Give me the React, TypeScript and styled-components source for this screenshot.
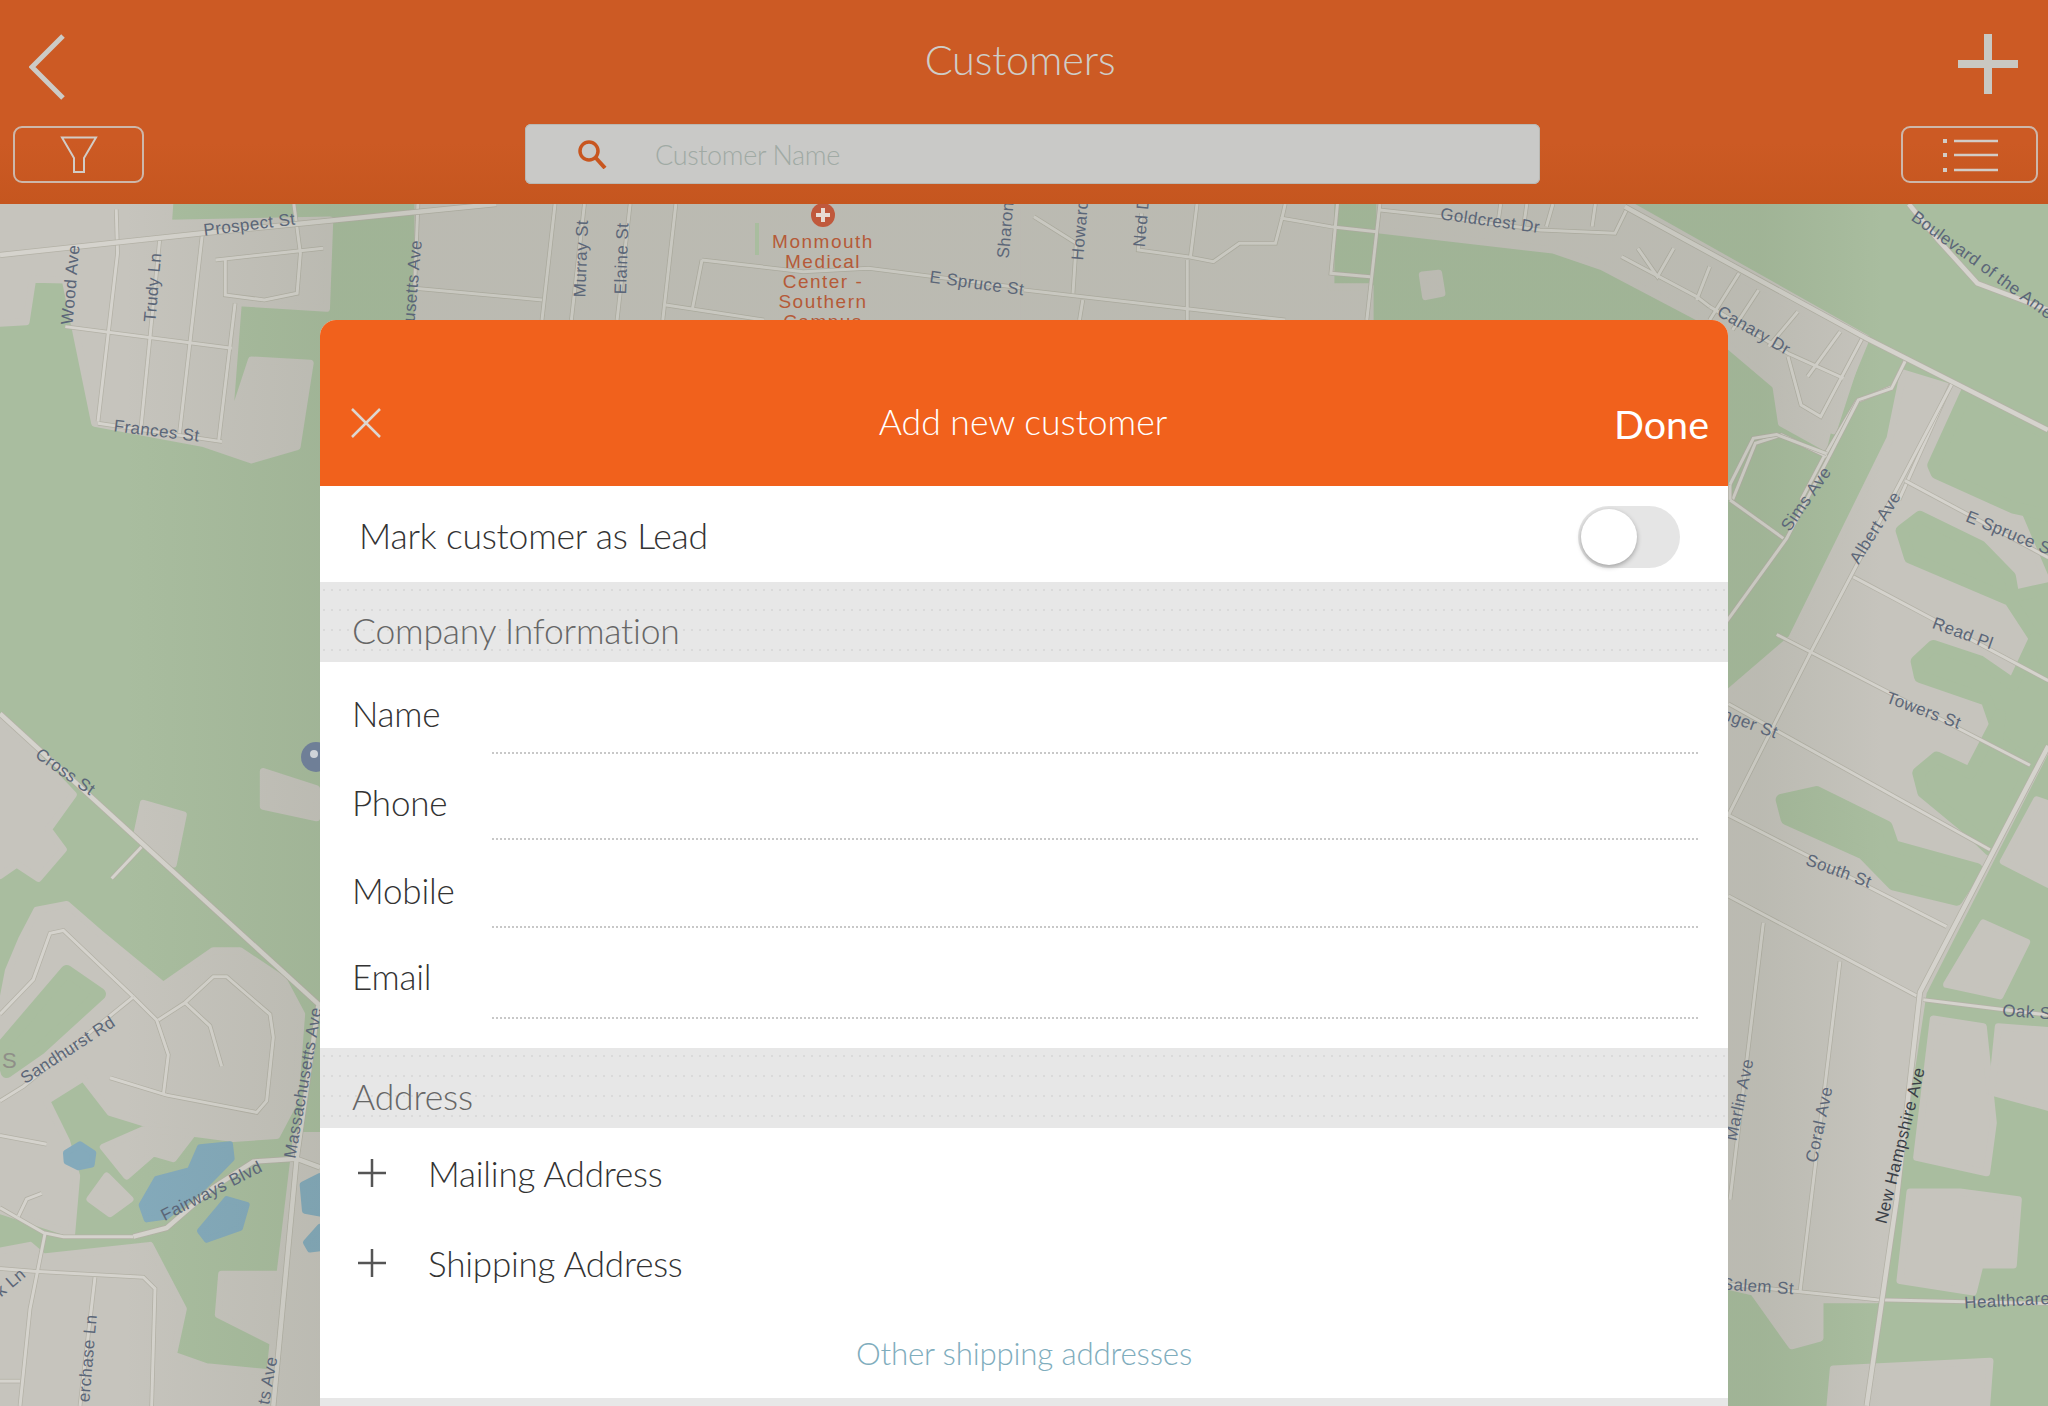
import React from 'react';
import styled, { createGlobalStyle } from 'styled-components';

const GlobalStyle = createGlobalStyle`
  html, body { margin: 0; padding: 0; background: #fff; }
  body { font-family: Lato, "Open Sans", sans-serif; font-weight: 300; }
`;

const Page = styled.div`
  position: relative; width: 2048px; height: 1406px; overflow: hidden;
  display: flex; flex-direction: column;
`;

const TopBar = styled.header`
  flex: 0 0 204px; display: flex; flex-direction: column;
  background: linear-gradient(180deg, #cc5a24 0%, #cc5a24 70%, #c5561f 100%);
`;
const TitleRow = styled.div`
  height: 124px; display: flex; align-items: flex-start; justify-content: space-between;
  padding: 0 29px 0 29px;
`;
const BackButton = styled.button`
  width: 40px; height: 70px; margin-top: 32px; padding: 0; border: none; background: none;
`;
const AddButton = styled.button`
  width: 62px; height: 62px; margin-top: 33px; padding: 0; border: none; background: none;
`;
const Title = styled.h1`
  margin: 36px 0 0 14px; font-size: 41.5px; line-height: 46px; font-weight: 300;
  color: #cfcdc8; letter-spacing: -0.2px;
`;
const ToolRow = styled.div`
  display: grid; grid-template-columns: 131px 1fr 137px; align-items: start; padding: 0 10px 0 13px;
`;
const ToolButton = styled.button`
  height: 57px; margin-top: 2px; padding: 0; background: none; border-radius: 9px;
  border: 2px solid #cdb7aa; display: flex; align-items: center; justify-content: center;
`;
const SearchBox = styled.div`
  height: 60px; margin: 0 361px 0 381px; background: #c9c9c7; border-radius: 6px;
  box-shadow: inset 0 0 0 1px #b9b8b3;
  display: flex; align-items: center; padding-left: 52px; box-sizing: border-box;
`;
const SearchText = styled.span`
  margin-left: 48px; font-size: 27px; color: #a0aaa4; letter-spacing: -0.35px;
`;

const MapArea = styled.div`
  flex: 1; overflow: hidden; background: #a9bd9f;
`;
const MapCanvas = styled.svg`
  display: block; width: 2048px; height: 1202px;
`;
const StreetLabel = styled.text<{ $dark?: boolean }>`
  font-family: "Liberation Sans", Arial, sans-serif; font-size: 17px; letter-spacing: 0.4px;
  fill: ${p => (p.$dark ? '#3a3f48' : '#5b6678')}; text-anchor: middle; dominant-baseline: central;
`;
const PlaceLabel = styled.text`
  font-family: "Liberation Sans", Arial, sans-serif; font-size: 19px; letter-spacing: 1.5px;
  fill: #b55a38; text-anchor: middle;
`;

const Modal = styled.section`
  position: absolute; left: 320px; top: 320px; width: 1408px; bottom: 0;
  background: #fff; border-radius: 16px 16px 0 0; overflow: hidden;
`;
const ModalHeader = styled.div`
  height: 166px; background: #f1611c; color: #fff; box-sizing: border-box;
  display: grid; grid-template-columns: 1fr auto 1fr; align-items: center;
  padding: 37px 19px 0 31px;
`;
const CloseButton = styled.button`
  justify-self: start; width: 30px; height: 30px; margin-top: 2px; padding: 0; border: none; background: none;
`;
const ModalTitle = styled.h2`
  margin: 0 14px 0 0; font-size: 35.5px; line-height: 44px; font-weight: 300; color: #fff;
`;
const DoneButton = styled.button`
  justify-self: end; padding: 0; border: none; background: none; color: #fff;
  font-family: Lato, sans-serif; font-size: 39.5px; line-height: 48px; font-weight: 400;
  margin-top: 4px;
`;
const LeadRow = styled.div`
  height: 96px; display: flex; align-items: center; justify-content: space-between;
  padding: 0 48px 0 39px;
`;
const RowText = styled.span`
  font-size: 35px; color: #333; letter-spacing: -0.2px;
`;
const LeadText = styled(RowText)`
  font-size: 35.5px; margin-top: 2px;
`;
const Toggle = styled.div`
  width: 102px; height: 62px; padding: 3px; box-sizing: border-box; border-radius: 31px;
  background: #e5e5e5; margin-top: 6px;
`;
const ToggleKnob = styled.div`
  width: 56px; height: 56px; border-radius: 50%; background: #fff;
  box-shadow: 0 2px 5px rgba(0, 0, 0, 0.3);
`;
const SectionHead = styled.div`
  height: 80px; box-sizing: border-box; padding: 0 0 9px 32px; display: flex; align-items: flex-end;
  font-size: 35.5px; line-height: 44px; color: #666; letter-spacing: -0.2px;
  background-color: #e7e7e7;
  background-image: radial-gradient(circle, #dadada 0.7px, transparent 1px);
  background-size: 8px 20px;
  background-position: 0 18px;
`;
const Fields = styled.div`
  padding-bottom: 29px;
`;
const FieldRow = styled.div<{ $height: number }>`
  height: ${p => p.$height}px; display: flex; align-items: flex-end; padding: 0 30px 0 32px;
`;
const FieldLabel = styled.label<{ $height: number }>`
  width: 140px; height: ${p => p.$height}px; font-size: 35px; line-height: 76px; color: #333; letter-spacing: -0.2px;
`;
const FieldLine = styled.div`
  flex: 1; border-bottom: 2px dotted #c8c8c8;
`;
const AddressRow = styled.div`
  height: 90px; display: flex; align-items: center; padding-left: 38px;
`;
const AddressIcon = styled.svg`
  width: 28px; height: 28px; margin-right: 42px;
`;
const OtherLink = styled.a`
  display: block; height: 90px; line-height: 90px; text-align: center;
  font-size: 31.3px; color: #7fadbd; letter-spacing: -0.2px;
`;
const BottomStrip = styled.div`
  height: 8px; background: #e7e7e7;
`;

// map coordinates were read off zoomed crops, so each area has its own scale
const AREA = {
  a: 'scale(0.653 0.3333)',
  b: 'translate(1024 0) scale(0.653 0.3333)',
  c: 'translate(0 500) scale(0.3333 0.5778)',
  d: 'translate(1720 200) scale(0.3333 0.769)',
};
const LAND = '#c6c4bd';
const GREEN = '#a9bd9f';
const WATER = '#84aabb';

type Area = keyof typeof AREA;
const areas = Object.keys(AREA) as Area[];

const land: Record<Area, string[]> = {
  a: [
    '0,612 260,612 258,670 505,660 500,925 365,908 350,1290 385,1080 475,1090 455,1340 385,1380 310,1330 145,1270 100,840 50,838 40,965 0,970',
    '640,612 1568,612 1568,1000 640,1000',
  ],
  b: [
    '0,612 470,612 470,860 530,860 530,1000 0,1000',
    '545,612 925,612 1290,1015 1230,1300 1225,1340 1160,1270 1145,1075 1040,960 885,800 810,750 545,690',
    '610,825 635,820 640,880 615,890',
  ],
  c: [
    '0,375 220,510 145,570 190,605 115,655 50,630 0,650',
    '0,890 25,815 65,760 110,710 200,700 300,750 490,840 640,780 720,780 850,830 905,890 885,1040 830,1100 700,1105 500,1090 330,1060 250,1000 140,1040 200,1110 230,1170 215,1270 0,1230',
    '0,1300 90,1290 130,1310 450,1290 550,1400 520,1480 620,1500 800,1510 810,1568 0,1568',
    '665,1340 840,1340 810,1455 655,1410',
    '890,1100 960,1100 960,1568 800,1568 840,1340',
    '790,470 950,500 950,550 790,530',
    '430,525 550,545 520,630 410,580',
    '310,1120 430,1090 580,1095 520,1140 460,1130 380,1170',
    '270,1210 320,1170 390,1210 330,1235',
  ],
  d: [
    '0,650 215,570 510,310 550,225 740,250 985,500 985,710 610,1030 470,1430 300,1430 300,1480 215,1490 100,1420 0,1410',
    '640,1065 790,1075 820,1200 800,1265 590,1245',
    '835,1075 985,1080 985,1180 815,1160',
    '570,1290 720,1290 895,1300 880,1385 780,1385 760,1420 540,1405',
    '340,1520 810,1510 800,1568 330,1568',
    '680,1020 790,940 920,965 840,1035',
    '850,860 950,780 985,785 985,890',
    '0,100 430,180 340,300 300,290 0,180',
  ],
};

const green: Record<Area, string[]> = {
  a: [],
  b: [],
  c: ['0,950 200,815 300,855 120,950 20,990'],
  d: [
    '640,345 740,250 985,305 985,410 880,400 650,355',
    '545,430 600,412 780,450 870,490 880,515 985,505 985,610 945,570 870,520 570,465',
    '590,600 640,580 780,600 880,630 945,570 985,610 985,700 930,735 840,700 800,650 600,620',
    '595,745 650,725 750,745 840,670 830,705 930,740 810,845 750,820 610,770',
    '185,780 290,770 500,815 520,840 770,870 710,910 520,890 430,850 200,805',
  ],
};

const water: Record<Area, string[]> = {
  a: [],
  b: [],
  c: [
    '198,1130 240,1115 280,1130 275,1150 235,1155 200,1145',
    '425,1220 470,1175 570,1160 600,1120 690,1115 695,1140 610,1190 500,1240 440,1245',
    '600,1265 680,1210 740,1220 720,1260 620,1280',
    '908,1185 960,1170 960,1235 915,1230',
    '918,1285 960,1258 960,1295 930,1297',
  ],
  d: [],
};

const roads: Record<Area, string[]> = {
  a: [
    'M178 628 L180 760 L150 1265', 'M245 710 L215 1300', 'M310 700 L275 1300', 'M360 910 L335 1320',
    'M100 980 L355 1045', 'M150 1270 L340 1325', 'M330 780 L495 745',
    'M345 780 L345 885 L405 900 L455 880 L460 760 L450 612', 'M640 612 L635 860', 'M635 865 L830 900',
    'M850 612 L830 960', 'M895 612 L875 960', 'M965 612 L945 960', 'M1035 612 L1015 960',
    'M1075 780 L1060 930', 'M1075 780 L1230 815 L1330 805 L1568 865', 'M1020 915 L1170 960',
  ],
  b: [
    'M0 870 L400 960', 'M90 900 L85 960', 'M75 880 L80 730 L15 650', 'M250 960 L250 780',
    'M180 640 L175 750 L250 770 L290 785 L330 730 L385 730 L395 655 L470 680 L540 695',
    'M400 612 L395 655', 'M265 612 L255 770', 'M480 612 L470 820 L530 830', 'M545 612 L525 960',
    'M545 630 L640 650 L790 690 L905 700 L925 620', 'M730 612 L725 680', 'M770 612 L765 680',
    'M810 612 L800 680', 'M875 612 L870 680', 'M915 770 L1030 890 L1050 920', 'M940 745 L970 830 L995 745',
    'M1050 800 L1030 900', 'M1095 820 L1050 960', 'M1125 870 L1085 990', 'M1185 935 L1140 1040',
    'M1250 995 L1200 1130', 'M1050 920 L1170 1060 L1255 1135', 'M1170 1070 L1190 1215 L1220 1250 L1285 1010',
    'M1350 1080 L1330 1160 L1275 1205 L1225 1370 L1190 1500', 'M1420 1150 L1340 1500',
    'M1085 1500 L1120 1330 L1160 1305 L1230 1370',
  ],
  c: [
    'M335 655 L425 600', 'M0 1040 L70 1015 L400 860', 'M400 860 L190 745 L150 750 L100 830 L0 890',
    'M400 860 L470 900 L505 960 L490 1030',
    'M475 900 L555 870 L640 825 L680 825 L810 890 L820 930 L800 1040 L770 1060 L500 1030 L330 1000',
    'M555 870 L630 910 L665 980', 'M0 1225 L130 1268 L190 1275 L400 1275',
    'M135 1270 L90 1400 L60 1568', 'M0 1330 L100 1335 L430 1345 L465 1365 L455 1568', 'M285 1345 L240 1568',
    'M0 1100 L140 1115', 'M55 1240 L80 1210 L125 1200', 'M0 1525 L60 1525',
  ],
  d: [
    'M555 210 L515 245 L415 260 L200 440 L0 560', 'M695 240 L270 590 L25 800', 'M170 565 L930 735',
    'M400 490 L985 625', 'M555 365 L985 465', 'M25 655 L810 845', 'M25 800 L680 945', 'M25 905 L590 1035',
    'M610 1040 L985 1060', 'M130 940 L30 1300', 'M360 990 L240 1420', 'M25 1410 L470 1430 L985 1435',
    'M30 370 L100 310 L170 305 L320 330', 'M30 390 L190 440', 'M30 370 L30 390',
  ],
};

const majorRoads: Record<Area, string[]> = {
  a: ['M0 765 L310 700 L760 612'],
  b: ['M920 620 L1290 1015 L1568 1290', 'M1355 612 L1400 720 L1460 850 L1568 930'],
  c: [
    'M0 370 L960 875', 'M955 875 L890 1140 L820 1568',
    'M400 1275 L500 1260 L640 1190 L760 1145 L890 1140 L960 1155',
  ],
  d: ['M985 710 L600 1030 L530 1300 L440 1568'],
};

// [text, x, y, angle] in the scale of the 1568px wide picture
const labels: [string, number, number, number, boolean?][] = [
  ['Prospect St', 191, 172, -7],
  ['Wood Ave', 54, 218, -85],
  ['Trudy Ln', 117, 220, -85],
  ['Frances St', 120, 330, 7],
  ['usetts Ave', 316, 215, -85],
  ['Murray St', 445, 198, -88],
  ['Elaine St', 476, 198, -88],
  ['Sharon', 770, 176, -85],
  ['E Spruce St', 748, 217, 8],
  ['Howard', 827, 176, -85],
  ['Ned D', 874, 170, -85],
  ['Goldcrest Dr', 1141, 169, 8],
  ['Canary Dr', 1343, 253, 30],
  ['Boulevard of the Ame', 1518, 203, 36],
  ['Sims Ave', 1383, 382, -55],
  ['Albert Ave', 1436, 404, -58],
  ['E Spruce S', 1538, 408, 22],
  ['Read Pl', 1503, 485, 20],
  ['Towers St', 1473, 544, 20],
  ['nger St', 1340, 554, 20],
  ['South St', 1408, 667, 20],
  ['Marlin Ave', 1332, 842, -78],
  ['Coral Ave', 1393, 861, -78],
  ['New Hampshire Ave', 1455, 877, -76, true],
  ['Oak S', 1552, 775, 4],
  ['Salem St', 1346, 985, 4],
  ['Healthcare', 1537, 996, -3],
  ['Cross St', 50, 591, 35],
  ['Sandhurst Rd', 52, 804, -33],
  ['Fairways Blvd', 162, 912, -27],
  ['Massachusetts Ave', 232, 829, -80],
  ['k Ln', 8, 982, -40],
  ['erchase Ln', 67, 1040, -85],
  ['ts Ave', 205, 1057, -80],
];

const campus = ['Monmouth', 'Medical', 'Center -', 'Southern', 'Campus'];

const Polys: React.FC<{ list: string[]; fill: string; round: number }> = ({ list, fill, round }) => (
  <>
    {list.map(points => (
      <polygon
        key={points}
        points={points}
        fill={fill}
        stroke={fill}
        strokeWidth={round}
        strokeLinejoin="round"
        vectorEffect="non-scaling-stroke"
      />
    ))}
  </>
);

const Roads: React.FC<{ list: string[]; width: number }> = ({ list, width }) => (
  <>
    {list.map(d => (
      <path key={d} d={d} fill="none" stroke="#b3b1a6" strokeWidth={width + 1.5} vectorEffect="non-scaling-stroke" />
    ))}
    {list.map(d => (
      <path key={d + 'x'} d={d} fill="none" stroke="#d5d3cd" strokeWidth={width} vectorEffect="non-scaling-stroke" />
    ))}
  </>
);

const StreetMap: React.FC = () => (
  <MapCanvas viewBox="0 204 2048 1202">
    <defs>
      <linearGradient id="shade" gradientUnits="userSpaceOnUse" x1="0" y1="0" x2="2048" y2="0">
        <stop offset="0.06" stopColor="#3c4a30" stopOpacity="0" />
        <stop offset="0.16" stopColor="#3c4a30" stopOpacity="0.08" />
        <stop offset="0.86" stopColor="#3c4a30" stopOpacity="0.08" />
        <stop offset="0.92" stopColor="#3c4a30" stopOpacity="0" />
      </linearGradient>
    </defs>
    <rect x="0" y="204" width="2048" height="1202" fill={GREEN} />
    {areas.map(area => (
      <g key={area} transform={AREA[area]}>
        <Polys list={land[area]} fill={LAND} round={7} />
        <Polys list={green[area]} fill={GREEN} round={12} />
        <Polys list={water[area]} fill={WATER} round={6} />
      </g>
    ))}
    {areas.map(area => (
      <g key={area} transform={AREA[area]}>
        <Roads list={roads[area]} width={3} />
        <Roads list={majorRoads[area]} width={4.5} />
      </g>
    ))}
    <rect x="0" y="204" width="2048" height="1202" fill="url(#shade)" />
    <path d="M757 223 V255" stroke={GREEN} strokeWidth="4" />
    <circle cx="823" cy="215" r="12" fill="#c0593c" />
    <path d="M823 208 V222 M816 215 H830" stroke="#e8dcd4" strokeWidth="4" />
    {campus.map((line, i) => (
      <PlaceLabel key={line} x={823} y={248 + i * 20}>{line}</PlaceLabel>
    ))}
    <circle cx="316" cy="757" r="15" fill="#6f7f97" />
    <circle cx="314" cy="754" r="4" fill="#cfd3d8" />
    <text x="2" y="1068" fontFamily="Liberation Sans, sans-serif" fontSize="22" fill="#8f8f88">S</text>
    {labels.map(([text, x, y, angle, dark]) => (
      <StreetLabel
        key={text}
        $dark={dark}
        transform={`translate(${x * 1.306} ${y * 1.306}) rotate(${angle})`}
      >
        {text}
      </StreetLabel>
    ))}
  </MapCanvas>
);

const fields: [string, number, number][] = [
  ['Name', 92, 79],
  ['Phone', 86, 76],
  ['Mobile', 88, 76],
  ['Email', 91, 81],
];

const PlusIcon: React.FC = () => (
  <AddressIcon viewBox="0 0 28 28">
    <path d="M14 0 V28 M0 14 H28" stroke="#555" strokeWidth="2.5" fill="none" />
  </AddressIcon>
);

const App: React.FC = () => (
  <Page>
    <GlobalStyle />
    <TopBar>
      <TitleRow>
        <BackButton>
          <svg width="40" height="70" viewBox="0 0 40 70">
            <path d="M34 4 L3 35 L34 66" fill="none" stroke="#cccbc6" strokeWidth="5" />
          </svg>
        </BackButton>
        <Title>Customers</Title>
        <AddButton>
          <svg width="62" height="62" viewBox="0 0 62 62">
            <path d="M31 1 V61 M1 31 H61" fill="none" stroke="#c9c8c2" strokeWidth="8" />
          </svg>
        </AddButton>
      </TitleRow>
      <ToolRow>
        <ToolButton>
          <svg width="38" height="38" viewBox="0 0 38 38">
            <path d="M2 1.5 H36 L24 22 V36 H14 V22 Z" fill="none" stroke="#d2ccc6" strokeWidth="2" />
          </svg>
        </ToolButton>
        <SearchBox>
          <svg width="30" height="30" viewBox="0 0 30 30">
            <circle cx="12" cy="12" r="9" fill="none" stroke="#c8561f" strokeWidth="3.5" />
            <path d="M18 18 L28 29" stroke="#c8561f" strokeWidth="4" />
          </svg>
          <SearchText>Customer Name</SearchText>
        </SearchBox>
        <ToolButton>
          <svg width="60" height="38" viewBox="0 0 60 38">
            <path d="M14 5 H58 M14 19 H58 M14 34 H58" stroke="#d2ccc6" strokeWidth="2.5" />
            <path d="M5 3 V7 M5 17 V21 M5 32 V36" stroke="#d2ccc6" strokeWidth="4" />
          </svg>
        </ToolButton>
      </ToolRow>
    </TopBar>
    <MapArea>
      <StreetMap />
    </MapArea>
    <Modal>
      <ModalHeader>
        <CloseButton>
          <svg width="30" height="30" viewBox="0 0 30 30">
            <path d="M1 1 L29 29 M29 1 L1 29" stroke="#ddd6d0" strokeWidth="2.5" />
          </svg>
        </CloseButton>
        <ModalTitle>Add new customer</ModalTitle>
        <DoneButton>Done</DoneButton>
      </ModalHeader>
      <LeadRow>
        <LeadText>Mark customer as Lead</LeadText>
        <Toggle><ToggleKnob /></Toggle>
      </LeadRow>
      <SectionHead>Company Information</SectionHead>
      <Fields>
        {fields.map(([label, height, labelHeight]) => (
          <FieldRow key={label} $height={height}>
            <FieldLabel $height={labelHeight}>{label}</FieldLabel>
            <FieldLine />
          </FieldRow>
        ))}
      </Fields>
      <SectionHead>Address</SectionHead>
      <AddressRow><PlusIcon /><RowText>Mailing Address</RowText></AddressRow>
      <AddressRow><PlusIcon /><RowText>Shipping Address</RowText></AddressRow>
      <OtherLink>Other shipping addresses</OtherLink>
      <BottomStrip />
    </Modal>
  </Page>
);

export default App;
